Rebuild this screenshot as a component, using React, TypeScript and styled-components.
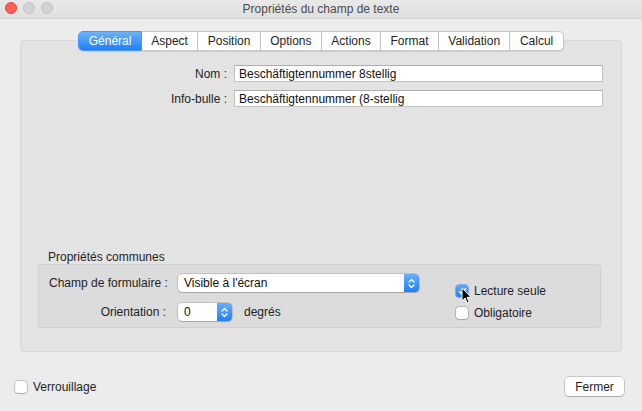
import React from "react"
import styled, { createGlobalStyle } from "styled-components"

const GlobalStyle = createGlobalStyle`
  html, body {
    margin: 0;
    padding: 0;
    background: #ececec;
  }
  body {
    font-family: "Liberation Sans", Arial, sans-serif;
    font-size: 12px;
    color: #232323;
  }
  * {
    box-sizing: border-box;
  }
`

const Window = styled.div`
  position: relative;
  width: 642px;
  height: 411px;
  display: flex;
  flex-direction: column;
  background: #ececec;
  overflow: hidden;
  border-radius: 0 0 5px 5px;
`

const TitleBar = styled.div`
  height: 19px;
  display: grid;
  grid-template-columns: 1fr auto 1fr;
  align-items: start;
  padding: 2px 5px 0;
  background: linear-gradient(#e9e9e9, #dfdfdf);
  border-bottom: 1px solid #d3d3d3;
`

const Lights = styled.div`
  display: flex;
  gap: 6px;
`

const Light = styled.span<{ $color: string; $edge: string }>`
  width: 12px;
  height: 12px;
  border-radius: 50%;
  background: ${({ $color }) => $color};
  border: 1px solid ${({ $edge }) => $edge};
`

const Title = styled.div`
  color: #4b4b4b;
  line-height: 14px;
`

const TabBar = styled.div`
  position: relative;
  z-index: 1;
  display: flex;
  justify-content: center;
  margin-top: 12px;
  margin-bottom: -11px;
  height: 20px;
`

const Tab = styled.div<{ $active?: boolean }>`
  display: flex;
  align-items: center;
  padding: 0 9.4px;
  height: 20px;
  background: ${({ $active }) => ($active ? "linear-gradient(#6cb2fc, #1e80fa)" : "#ffffff")};
  color: ${({ $active }) => ($active ? "#ffffff" : "#232323")};
  border: 1px solid ${({ $active }) => ($active ? "#4c96f6" : "#c6c6c6")};
  border-left-width: 0;
  box-shadow: 0 1px 1px rgba(0, 0, 0, 0.08);

  &:first-child {
    border-left-width: 1px;
    border-radius: 5px 0 0 5px;
  }
  &:last-child {
    border-radius: 0 5px 5px 0;
  }
`

const Panel = styled.div`
  height: 312px;
  margin: 0 20px;
  display: flex;
  flex-direction: column;
  padding: 24px 18px 23px 17px;
  background: #e3e3e3;
  border: 1px solid #d7d7d7;
  border-radius: 4px;
`

const FieldGrid = styled.div`
  display: grid;
  grid-template-columns: 189px 1fr;
  column-gap: 7px;
  row-gap: 8px;
  align-items: center;
`

const Label = styled.span`
  text-align: right;
  white-space: nowrap;
`

const TextInput = styled.input`
  height: 17px;
  padding: 0 4px;
  font: inherit;
  color: #111;
  background: #ffffff;
  border: 1px solid #c2c2c2;
  border-top-color: #aeaeae;
  outline: none;
`

const Section = styled.div`
  margin-top: auto;
  margin-right: 2px;
`

const Caption = styled.div`
  line-height: 14px;
  padding-left: 10px;
`

const GroupBox = styled.div`
  height: 64px;
  display: flex;
  padding: 9px 10px 0 10px;
  background: #dcdcdc;
  border: 1px solid #d0d0d0;
  border-radius: 4px;
`

const GroupGrid = styled.div`
  display: grid;
  grid-template-columns: 117px auto;
  column-gap: 12px;
  row-gap: 11px;
  align-items: center;
  align-content: start;
`

const Popup = styled.div<{ $width: number }>`
  position: relative;
  width: ${({ $width }) => $width}px;
  height: 18px;
  display: flex;
  align-items: center;
  padding-left: 6px;
  background: #ffffff;
  border-radius: 4px;
  box-shadow: 0 0 0 0.5px rgba(0, 0, 0, 0.25), 0 1px 1px rgba(0, 0, 0, 0.15);
  color: #111;
`

const Stepper = styled.div`
  position: absolute;
  top: 0;
  right: 0;
  bottom: 0;
  width: 15px;
  display: flex;
  align-items: center;
  justify-content: center;
  border-radius: 0 4px 4px 0;
  background: linear-gradient(#69b0fc, #1f7ff9);
`

const InlineRow = styled.div`
  display: flex;
  align-items: center;
  gap: 12px;
`

const CheckCol = styled.div`
  display: flex;
  flex-direction: column;
  gap: 8px;
  margin-left: 37px;
  padding-top: 10px;
`

const CheckRow = styled.label`
  display: flex;
  align-items: center;
  gap: 6px;
  line-height: 14px;
`

const Box = styled.span<{ $checked?: boolean }>`
  width: 12px;
  height: 12px;
  display: flex;
  align-items: center;
  justify-content: center;
  border-radius: 3px;
  background: ${({ $checked }) => ($checked ? "linear-gradient(#5fa8fb, #2380f8)" : "#ffffff")};
  box-shadow: ${({ $checked }) =>
    $checked ? "0 0 0 0.5px #2a7ae8" : "0 0 0 0.5px rgba(0,0,0,0.35), 0 1px 1px rgba(0,0,0,0.1)"};
`

const Footer = styled.div`
  display: flex;
  align-items: center;
  justify-content: space-between;
  margin-top: 25px;
  padding: 0 18px 0 15px;
`

const Button = styled.button`
  width: 59px;
  height: 19px;
  padding: 0;
  font: inherit;
  color: #1d1d1d;
  background: #ffffff;
  border: none;
  border-radius: 4px;
  box-shadow: 0 0 0 0.5px rgba(0, 0, 0, 0.3), 0 1px 1px rgba(0, 0, 0, 0.15);
`

const Cursor = styled.svg`
  position: absolute;
  left: 461px;
  top: 287px;
`

const Chevrons = () => (
  <svg width="7" height="11" viewBox="0 0 7 11">
    <path d="M1 4 L3.5 1.5 L6 4 M1 7 L3.5 9.5 L6 7" fill="none" stroke="#fff" strokeWidth="1.3" strokeLinecap="round" strokeLinejoin="round" />
  </svg>
)

const Check = () => (
  <svg width="9" height="9" viewBox="0 0 9 9">
    <path d="M1.5 4.6 L3.6 6.8 L7.6 1.8" fill="none" stroke="#fff" strokeWidth="1.6" strokeLinecap="round" strokeLinejoin="round" />
  </svg>
)

const tabs = ["Général", "Aspect", "Position", "Options", "Actions", "Format", "Validation", "Calcul"]

export default function App() {
  return (
    <>
      <GlobalStyle />
      <Window>
        <TitleBar>
          <Lights>
            <Light $color="#fc5f57" $edge="#e2463f" />
            <Light $color="#d3d3d3" $edge="#c2c2c2" />
            <Light $color="#d3d3d3" $edge="#c2c2c2" />
          </Lights>
          <Title>Propriétés du champ de texte</Title>
          <span />
        </TitleBar>

        <TabBar>
          {tabs.map((t, i) => (
            <Tab key={t} $active={i === 0}>{t}</Tab>
          ))}
        </TabBar>

        <Panel>
          <FieldGrid>
            <Label>Nom :</Label>
            <TextInput readOnly value="Beschäftigtennummer 8stellig" />
            <Label>Info-bulle :</Label>
            <TextInput readOnly value="Beschäftigtennummer (8-stellig" />
          </FieldGrid>

          <Section>
            <Caption>Propriétés communes</Caption>
            <GroupBox>
              <GroupGrid>
                <Label>Champ de formulaire :</Label>
                <Popup $width={241}>
                  Visible à l'écran
                  <Stepper><Chevrons /></Stepper>
                </Popup>
                <Label>Orientation :</Label>
                <InlineRow>
                  <Popup $width={54}>
                    0
                    <Stepper><Chevrons /></Stepper>
                  </Popup>
                  <span>degrés</span>
                </InlineRow>
              </GroupGrid>
              <CheckCol>
                <CheckRow>
                  <Box $checked><Check /></Box>
                  Lecture seule
                </CheckRow>
                <CheckRow>
                  <Box />
                  Obligatoire
                </CheckRow>
              </CheckCol>
            </GroupBox>
          </Section>
        </Panel>

        <Footer>
          <CheckRow>
            <Box />
            Verrouillage
          </CheckRow>
          <Button>Fermer</Button>
        </Footer>

        <Cursor width="11" height="17" viewBox="0 0 11 17">
          <path d="M1 1 L1 14 L4 11 L6.2 16 L8.2 15.1 L6 10.3 L10 10.3 Z" fill="#000" stroke="#fff" strokeWidth="1" strokeLinejoin="round" />
        </Cursor>
      </Window>
    </>
  )
}
